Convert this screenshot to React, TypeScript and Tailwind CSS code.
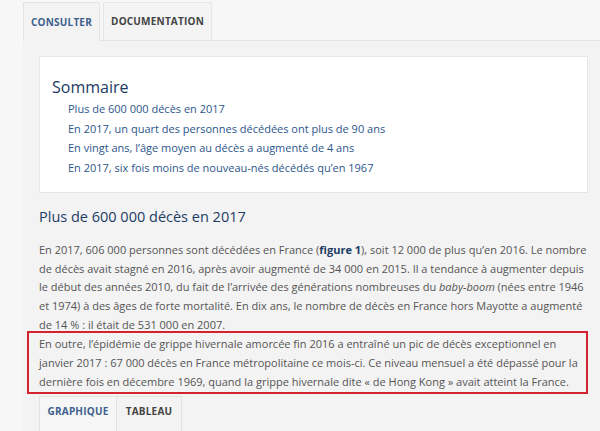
const sommaire = [
  "Plus de 600 000 décès en 2017",
  "En 2017, un quart des personnes décédées ont plus de 90 ans",
  "En vingt ans, l’âge moyen au décès a augmenté de 4 ans",
  "En 2017, six fois moins de nouveau-nés décédés qu’en 1967",
]

export default function App() {
  return (
    <div className="h-[431px] overflow-hidden bg-[#f7f7f7] pl-[23px] font-['Open_Sans',sans-serif]">
      {/* onglets du haut */}
      <div className="flex h-[41px] items-end gap-[3px] border-b border-[#e3e3e3]">
        <div className="-mb-px flex h-[39px] w-[77px] items-center justify-center border border-b-0 border-[#e3e3e3] bg-[#f3f3f3] text-[10px] font-bold tracking-[0.2px] text-[#3e5f8e]">
          CONSULTER
        </div>
        <div className="flex h-[38px] w-[109px] items-center justify-center border border-b-0 border-[#e6e6e6] bg-[#f4f4f4] text-[10px] font-bold tracking-[0.2px] text-[#444]">
          DOCUMENTATION
        </div>
      </div>

      <div className="h-full bg-[#f3f3f3] pr-[12px]">
        <div className="h-[15px]" />
        <div className="ml-[16px] h-[137px] border border-[#e6e6e6] bg-white pl-[12px] pt-[19px]">
          <h2 className="text-[16px] font-medium leading-[22px] text-[#1c3a63]">Sommaire</h2>
          <ul className="mt-[1px] pl-[16px]">
            {sommaire.map((s, i) => (
              <li key={i} className="text-[11px] leading-[19.5px] text-[#2d568c]">
                {s}
              </li>
            ))}
          </ul>
        </div>

        <h3 className="ml-[16px] mt-[13px] text-[14.5px] font-medium leading-[22px] text-[#1d3c66]">
          Plus de 600 000 décès en 2017
        </h3>
        <p className="ml-[16px] mt-[13px] text-[11px] leading-[18.7px] text-[#555]">
          En 2017, 606 000 personnes sont décédées en France (
          <span className="font-bold text-[#1d3c66]">figure 1</span>), soit 12 000 de plus qu’en 2016. Le nombre
          de décès avait stagné en 2016, après avoir augmenté de 34 000 en 2015. Il a tendance à augmenter depuis
          le début des années 2010, du fait de l’arrivée des générations nombreuses du <em>baby-boom</em> (nées
          entre 1946 et 1974) à des âges de forte mortalité. En dix ans, le nombre de décès en France hors Mayotte
          a augmenté de 14 % : il était de 531 000 en 2007.
        </p>

        <div className="ml-[4px] mt-[-4px] border-2 border-[#d2232f] py-[1px] pl-[10px] pr-[4px] text-[11px] leading-[19px] text-[#555]">
          En outre, l’épidémie de grippe hivernale amorcée fin 2016 a entraîné un pic de décès exceptionnel en
          janvier 2017 : 67 000 décès en France métropolitaine ce mois-ci. Ce niveau mensuel a été dépassé pour la
          dernière fois en décembre 1969, quand la grippe hivernale dite « de Hong Kong » avait atteint la France.
        </div>

        {/* onglets du bas */}
        <div className="ml-[16px] mt-[2px] flex">
          <div className="flex h-[40px] w-[78px] items-center justify-center border border-b-0 border-[#e3e3e3] bg-[#f6f6f6] pb-[10px] text-[10px] font-bold tracking-[0.2px] text-[#3e5f8e]">
            GRAPHIQUE
          </div>
          <div className="flex h-[40px] w-[65px] items-center justify-center border border-b-0 border-l-0 border-[#e3e3e3] bg-[#f3f3f3] pb-[10px] text-[10px] font-bold tracking-[0.2px] text-[#444]">
            TABLEAU
          </div>
        </div>
      </div>
    </div>
  )
}
